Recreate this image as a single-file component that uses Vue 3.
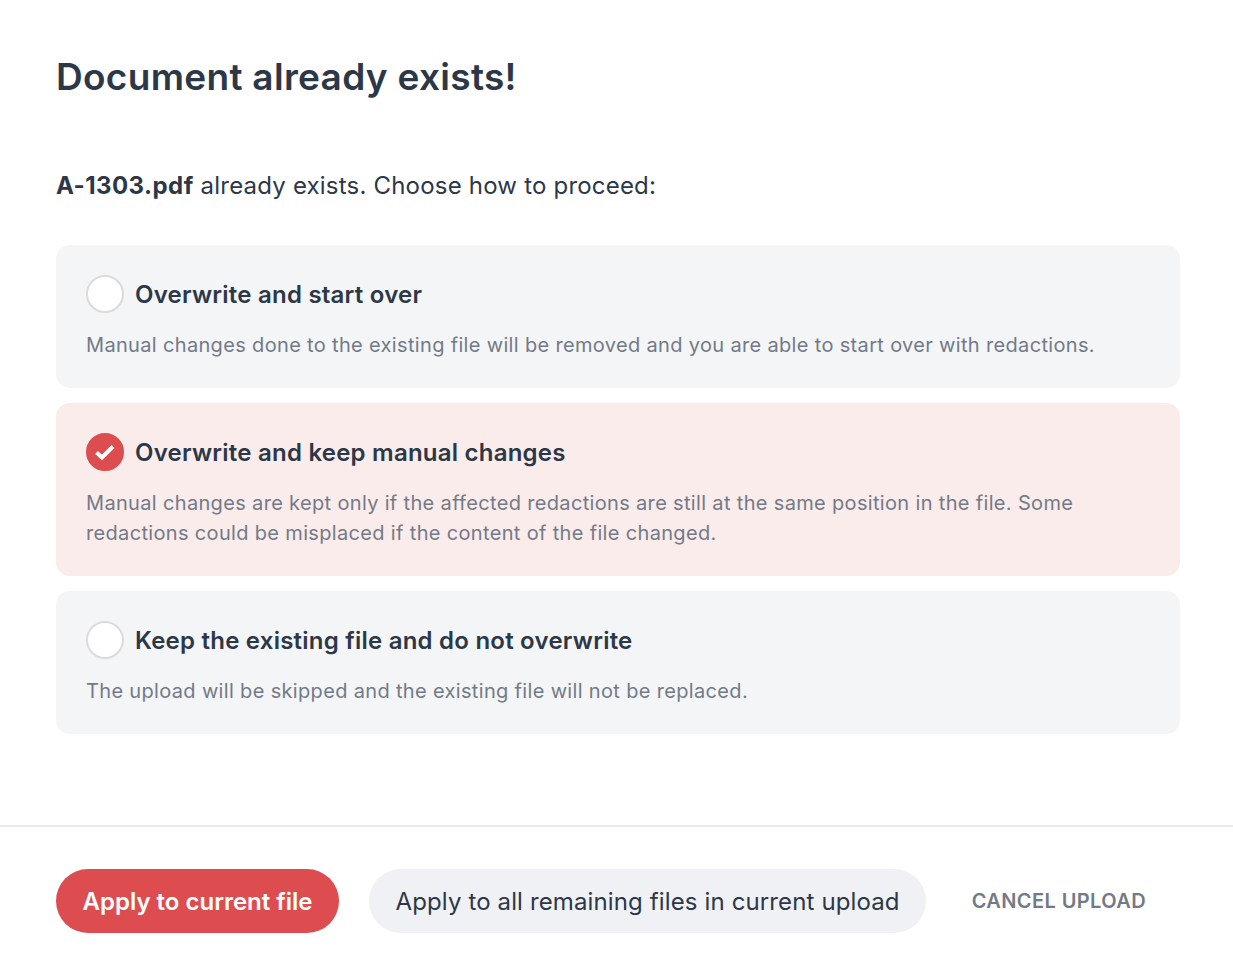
<script setup>
const options = [
  { title: 'Overwrite and start over', desc: 'Manual changes done to the existing file will be removed and you are able to start over with redactions.', on: false },
  { title: 'Overwrite and keep manual changes', desc: 'Manual changes are kept only if the affected redactions are still at the same position in the file. Some redactions could be misplaced if the content of the file changed.', on: true },
  { title: 'Keep the existing file and do not overwrite', desc: 'The upload will be skipped and the existing file will not be replaced.', on: false },
]
</script>

<template>
  <div class="dialog">
    <div class="body">
      <h1 class="title">Document already exists!</h1>
      <p class="lead"><strong>A-1303.pdf</strong> already exists. Choose how to proceed:</p>
      <div class="options">
        <div v-for="o in options" :key="o.title" class="option" :class="{ active: o.on }">
          <div class="head">
            <span class="radio" :class="{ checked: o.on }">
              <svg v-if="o.on" class="tick" width="22" height="18" viewBox="0 0 22 18"><path d="M2.5 9.5 8 14.5 19 3.5" fill="none" stroke="#fff" stroke-width="4"/></svg>
            </span>
            <span class="label">{{ o.title }}</span>
          </div>
          <p class="desc">{{ o.desc }}</p>
        </div>
      </div>
    </div>
    <div class="footer">
      <button class="btn primary">Apply to current file</button>
      <button class="btn secondary">Apply to all remaining files in current upload</button>
      <button class="cancel">CANCEL UPLOAD</button>
    </div>
  </div>
</template>

<style>
html, body { margin: 0; background: #fff; }
</style>

<style scoped>
.dialog { width: 1233px; height: 969px; background: #fff; font-family: Inter, "Liberation Sans", sans-serif; color: #2c3747; box-sizing: border-box; }
.body { padding: 53px 53px 0 56px; box-sizing: border-box; border-bottom: 2px solid #e8e9eb; height: 827px; }
.title { margin: 0; font-size: 37px; line-height: 48px; font-weight: 600; letter-spacing: 0.3px; }
.lead { margin: 67px 0 0; font-size: 24px; line-height: 36px; font-weight: 400; letter-spacing: 0.2px; }
.lead strong { font-weight: 700; letter-spacing: 0.45px; }
.options { margin-top: 41px; display: flex; flex-direction: column; gap: 15px; }
.option { background: #f4f5f7; border-radius: 14px; padding: 30px 30px 28px; }
.option.active { background: #faecea; }
.head { display: flex; align-items: center; gap: 11px; height: 38px; }
.radio { flex: none; width: 38px; height: 38px; box-sizing: border-box; border-radius: 50%; border: 2px solid #d9dbdf; background: #fff; display: flex; align-items: center; justify-content: center; }
.radio.checked { background: #dd4d50; border-color: #dd4d50; }
.tick { flex: none; }
.label { font-size: 24px; font-weight: 600; line-height: 36px; letter-spacing: 0.23px; padding-top: 2px; }
.desc { margin: 17px 0 0; font-size: 20px; line-height: 30px; color: #737a87; letter-spacing: 0.335px; }
.footer { display: flex; align-items: center; padding: 42px 0 0 56px; }
.btn { height: 64px; border: 0; border-radius: 32px; font-family: inherit; font-size: 24px; padding: 0 26.5px; }
.primary { background: #dd4d50; color: #fff; font-weight: 600; }
.secondary { background: #f0f1f4; color: #2c3747; margin-left: 30px; letter-spacing: 0.13px; }
.cancel { background: none; border: 0; font-family: inherit; font-size: 20px; font-weight: 600; color: #737a87; margin-left: 45.5px; padding: 0; letter-spacing: 0.4px; }
</style>
